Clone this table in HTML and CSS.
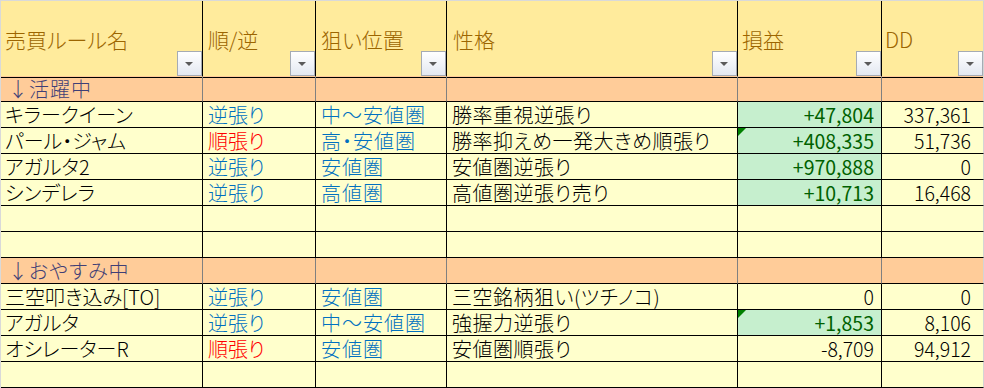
FILE: index.html
```
<!DOCTYPE html>
<html lang="ja">
<head>
<meta charset="utf-8">
<title>売買ルール</title>
<link rel="stylesheet" href="styles.css">
</head>
<body>
<div class="sheet">
  <div class="row head">
    <div class="cell c1">売買ルール名<span class="filter"></span></div>
    <div class="cell c2">順/逆<span class="filter"></span></div>
    <div class="cell c3">狙い位置<span class="filter"></span></div>
    <div class="cell c4">性格<span class="filter"></span></div>
    <div class="cell c5">損益<span class="filter"></span></div>
    <div class="cell c6 dd">DD<span class="filter"></span></div>
  </div>

  <div class="row section">
    <div class="cell c1">↓活躍中</div>
    <div class="cell c2"></div>
    <div class="cell c3"></div>
    <div class="cell c4"></div>
    <div class="cell c5"></div>
    <div class="cell c6"></div>
  </div>

  <div class="row">
    <div class="cell c1">キラークイーン</div>
    <div class="cell c2 blue">逆張り</div>
    <div class="cell c3 blue">中～安値圏</div>
    <div class="cell c4">勝率重視逆張り</div>
    <div class="cell c5 num good">+47,804</div>
    <div class="cell c6 num">337,361</div>
  </div>
  <div class="row">
    <div class="cell c1">パール・ジャム</div>
    <div class="cell c2 red">順張り</div>
    <div class="cell c3 blue">高・安値圏</div>
    <div class="cell c4">勝率抑えめ一発大きめ順張り</div>
    <div class="cell c5 num good flag">+408,335</div>
    <div class="cell c6 num">51,736</div>
  </div>
  <div class="row">
    <div class="cell c1">アガルタ2</div>
    <div class="cell c2 blue">逆張り</div>
    <div class="cell c3 blue">安値圏</div>
    <div class="cell c4">安値圏逆張り</div>
    <div class="cell c5 num good">+970,888</div>
    <div class="cell c6 num">0</div>
  </div>
  <div class="row">
    <div class="cell c1">シンデレラ</div>
    <div class="cell c2 blue">逆張り</div>
    <div class="cell c3 blue">高値圏</div>
    <div class="cell c4">高値圏逆張り売り</div>
    <div class="cell c5 num good">+10,713</div>
    <div class="cell c6 num">16,468</div>
  </div>
  <div class="row">
    <div class="cell c1"></div><div class="cell c2"></div><div class="cell c3"></div>
    <div class="cell c4"></div><div class="cell c5"></div><div class="cell c6"></div>
  </div>
  <div class="row">
    <div class="cell c1"></div><div class="cell c2"></div><div class="cell c3"></div>
    <div class="cell c4"></div><div class="cell c5"></div><div class="cell c6"></div>
  </div>

  <div class="row section">
    <div class="cell c1">↓おやすみ中</div>
    <div class="cell c2"></div>
    <div class="cell c3"></div>
    <div class="cell c4"></div>
    <div class="cell c5"></div>
    <div class="cell c6"></div>
  </div>

  <div class="row">
    <div class="cell c1">三空叩き込み[TO]</div>
    <div class="cell c2 blue">逆張り</div>
    <div class="cell c3 blue">安値圏</div>
    <div class="cell c4">三空銘柄狙い(ツチノコ)</div>
    <div class="cell c5 num">0</div>
    <div class="cell c6 num">0</div>
  </div>
  <div class="row">
    <div class="cell c1">アガルタ</div>
    <div class="cell c2 blue">逆張り</div>
    <div class="cell c3 blue">中～安値圏</div>
    <div class="cell c4">強握力逆張り</div>
    <div class="cell c5 num good flag">+1,853</div>
    <div class="cell c6 num">8,106</div>
  </div>
  <div class="row">
    <div class="cell c1">オシレーターR</div>
    <div class="cell c2 red">順張り</div>
    <div class="cell c3 blue">安値圏</div>
    <div class="cell c4">安値圏順張り</div>
    <div class="cell c5 num">-8,709</div>
    <div class="cell c6 num">94,912</div>
  </div>
  <div class="row">
    <div class="cell c1"></div><div class="cell c2"></div><div class="cell c3"></div>
    <div class="cell c4"></div><div class="cell c5"></div><div class="cell c6"></div>
  </div>
</div>
</body>
</html>
```

FILE: styles.css
```
* { box-sizing: border-box; }

html, body {
  margin: 0;
  padding: 0;
  background: #ffffff;
  overflow: hidden;
}

.sheet {
  width: 984px;
  border-top: 1px solid #d9d9d9;
  border-left: 1px solid #d9d9d9;
  font-family: "Noto Sans CJK JP", "Noto Sans", sans-serif;
  font-weight: 300;
  font-feature-settings: "palt";
  font-size: 20px;
  color: #000000;
}

.row {
  display: grid;
  grid-template-columns: 202px 113px 131px 291px 144px 102px;
  height: 26px;
  background: #ffffcc;
}

.cell {
  position: relative;
  border-right: 1px solid #000000;
  border-bottom: 1px solid #000000;
  line-height: 25px;
  white-space: nowrap;
  padding-left: 5px;
}

.c1 { padding-left: 4px; }
.c3 { letter-spacing: 1px; }
.c4 { letter-spacing: 0.5px; }
.c6 { border-right-color: #d4d4d4; }

/* header */
.head {
  height: 75px;
  background: #ffeb9c;
}
.head .cell {
  color: #9c6500;
  font-size: 21px;
  line-height: 76px;
  letter-spacing: 0;
}
.head .c4 { padding-left: 6px; }
.head .c5 { padding-left: 4px; }
.head .dd { padding-left: 3px; }

.filter {
  position: absolute;
  right: 0;
  bottom: 1px;
  width: 25px;
  height: 25px;
  border: 1px solid #a5abb4;
  background: linear-gradient(#ffffff, #e3e8f1);
}
.filter::after {
  content: "";
  position: absolute;
  left: 7px;
  top: 10px;
  border-left: 4.5px solid transparent;
  border-right: 4.5px solid transparent;
  border-top: 4.5px solid #5a5a5a;
}

/* section rows */
.section {
  background: #ffcc99;
}
.section .cell {
  color: #3f3f76;
  border-right-color: #808080;
}
.section .c1 { padding-left: 7px; letter-spacing: 1px; }
.section .c6 { border-right-color: #d4d4d4; }

/* text colours */
.blue { color: #0070c0; }
.red { color: #ff0000; }

.num {
  font-size: 19.5px;
  text-align: right;
  padding-left: 0;
  letter-spacing: 0;
}
.c5.num { padding-right: 7px; }
.c6.num { padding-right: 12px; }

.good {
  background: #c6efce;
  color: #006100;
  font-weight: 400;
}

.flag::before {
  content: "";
  position: absolute;
  left: 0;
  top: 0;
  border-top: 8px solid #008000;
  border-right: 8px solid transparent;
}
```
